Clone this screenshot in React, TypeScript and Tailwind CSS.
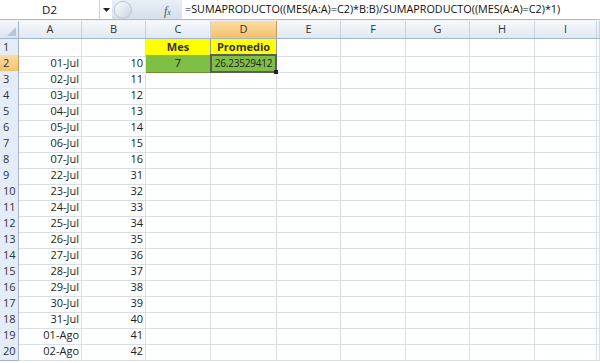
import React from "react";

const cols = ["A", "B", "C", "D", "E", "F", "G", "H", "I", ""];
const gridCols = "grid grid-cols-[19px_63px_64px_65px_66px_64px_65px_64px_65px_62px_3px]";

const dates = [
  "01-Jul", "02-Jul", "03-Jul", "04-Jul", "05-Jul", "06-Jul", "07-Jul",
  "22-Jul", "23-Jul", "24-Jul", "25-Jul", "26-Jul", "27-Jul", "28-Jul",
  "29-Jul", "30-Jul", "31-Jul", "01-Ago", "02-Ago",
];
const nums = [10, 11, 12, 13, 14, 15, 16, 31, 32, 33, 34, 35, 36, 37, 38, 39, 40, 41, 42];

const font = { fontFamily: "'Open Sans', 'Noto Sans', sans-serif" };

export default function App() {
  const rows = Array.from({ length: 20 }, (_, i) => i + 1);
  return (
    <div className="w-[600px] h-[363px] overflow-hidden bg-white text-[11px] text-[#222]" style={font}>
      {/* formula bar */}
      <div className="flex h-[20px] border-b border-[#a9bed6] bg-[#dfe7f1]">
        <div className="w-[100px] bg-white flex items-center justify-center text-[11.5px] text-[#111] border-r border-[#c9d4e2]">
          D2
        </div>
        <div className="w-[12px] flex items-center justify-center bg-white">
          <svg width="7" height="4" viewBox="0 0 7 4"><path d="M0 0h7L3.5 4z" fill="#222" /></svg>
        </div>
        <div className="w-[70px] flex items-center relative bg-gradient-to-b from-[#e9eff7] to-[#d6e0ec]">
          <div className="ml-[2px] w-[18px] h-[18px] rounded-full bg-gradient-to-br from-[#ffffff] to-[#c8d3e0] border border-[#b9c6d6]" />
          <span className="absolute left-[52px] top-[2px] italic text-[12px] text-[#555]" style={{ fontFamily: "'Liberation Serif', serif" }}>
            f<span className="text-[8px]">x</span>
          </span>
        </div>
        <div className="flex-1 bg-white flex items-center pl-[3px] text-[10.8px] text-[#111] whitespace-nowrap overflow-hidden">
          =SUMAPRODUCTO((MES(A:A)=C2)*B:B)/SUMAPRODUCTO((MES(A:A)=C2)*1)
        </div>
      </div>
      <div className="h-[1px] bg-[#eef2f7]" />
      {/* column headers */}
      <div className={`${gridCols} h-[18px] border-b border-[#9eb6ce]`}>
        <div className="border-r border-[#9eb6ce] bg-gradient-to-b from-[#f4f7fb] to-[#dce4ef] relative">
          <svg className="absolute right-[2px] bottom-[2px]" width="9" height="9" viewBox="0 0 9 9"><path d="M9 0V9H0z" fill="#b7c6d8" /></svg>
        </div>
        {cols.map((c) => (
          <div
            key={c || "end"}
            className={
              c === "D"
                ? "border-r border-[#c99d4f] bg-gradient-to-b from-[#fbdca3] to-[#f6bf6a] flex items-center justify-center text-[#333]"
                : "border-r border-[#c6d3e2] bg-gradient-to-b from-[#f6f8fb] to-[#e1e8f1] flex items-center justify-center text-[#333]"
            }
          >
            {c}
          </div>
        ))}
      </div>
      {/* rows */}
      {rows.map((r) => (
        <div key={r} className={`${gridCols} h-[16px]`}>
          <div
            className={
              r === 2
                ? "border-r border-b border-[#c99d4f] bg-gradient-to-b from-[#fbdca3] to-[#f6bf6a] flex items-center pl-[3px] text-[#333]"
                : "border-r border-b border-[#9eb6ce] bg-[#e4ecf7] flex items-center pl-[3px] text-[#333]"
            }
          >
            {r}
          </div>
          {/* A */}
          <div className="border-r border-b border-[#d8dfea] flex items-center justify-end pr-[2px]">
            {r >= 2 ? dates[r - 2] : ""}
          </div>
          {/* B */}
          <div className="border-r border-b border-[#d8dfea] flex items-center justify-end pr-[2px]">
            {r >= 2 ? nums[r - 2] : ""}
          </div>
          {/* C */}
          {r === 1 ? (
            <div className="border-r border-b border-[#9aa07a] bg-[#ffff00] flex items-center justify-center font-bold text-[#333]">Mes</div>
          ) : r === 2 ? (
            <div className="border-r border-b border-[#6a8f3c] bg-[#7fbf45] flex items-center justify-center text-[#222]">7</div>
          ) : (
            <div className="border-r border-b border-[#d8dfea]" />
          )}
          {/* D */}
          {r === 1 ? (
            <div className="border-r border-b border-[#9aa07a] bg-[#ffff00] flex items-center justify-center font-bold text-[#333]">Promedio</div>
          ) : r === 2 ? (
            <div className="relative border-2 border-[#5c5c5c] bg-[#7fbf45] flex items-center justify-center text-[10px] tracking-[-0.2px] text-[#222] mt-[-1px] ml-[-1px]">
              26.23529412
              <div className="absolute right-[-3px] bottom-[-3px] w-[4px] h-[4px] bg-[#222]" />
            </div>
          ) : (
            <div className="border-r border-b border-[#d8dfea]" />
          )}
          {cols.slice(4).map((c) => (
            <div key={c || "end"} className="border-r border-b border-[#d8dfea]" />
          ))}
        </div>
      ))}
    </div>
  );
}
